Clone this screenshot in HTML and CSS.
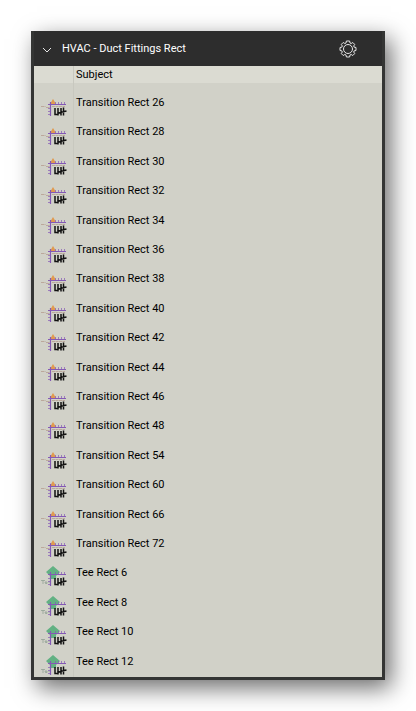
FILE: index.html
```
<!DOCTYPE html>
<html lang="en">
  <head>
    <meta charset="utf-8" />
    <title>HVAC - Duct Fittings Rect</title>
    <link rel="stylesheet" href="styles.css">
  </head>
  <body>
    <!-- Tool icons, reused by every row -->
    <svg class="sprite" aria-hidden="true">
      <symbol id="measure" viewBox="0 0 26 20">
        <path d="M7 7.5H25M9.5 5V19" fill="none" stroke="#8459b5" stroke-width="1.2" />
        <path d="M14.5 5V8M17.5 5V8M20.5 5V8M23.5 5V8M7 11.5H10M7 14.5H10M7 17.5H10" fill="none" stroke="#8459b5" stroke-opacity=".7" />
        <path d="M14 11V17.500H16.500M17 11V18.500M20 11V18.500M22.500 10.500V18.500M16.500 16.500L21 15L25.500 14" fill="none" stroke="#111" stroke-width="1.5" />
      </symbol>
      <symbol id="transition" viewBox="0 0 26 20">
        <path d="M12 2L15 7H9Z" fill="#e09a50" />
        <path d="M0 9.500H4.500M5 10.500H10M11 9.500H24" fill="none" stroke="#a6806f" stroke-width="1" stroke-dasharray="3 .5" opacity=".5" />
        <use href="#measure" />
      </symbol>
      <symbol id="tee" viewBox="0 0 26 20">
        <path d="M12 -1L19 5L15 9V12H9V9L5 5Z" fill="#62b183" />
        <path d="M0 13.500H4M2 13.500V17M4 15H6V16.500H4.500ZM7 15H9" fill="none" stroke="#78907f" stroke-width="1" opacity=".55" />
        <use href="#measure" />
      </symbol>
    </svg>

    <section class="panel">
      <header class="header">
        <button class="toggle" aria-label="Collapse">
          <svg width="10" height="6" viewBox="0 0 10 6"><path d="M1 1L5 5L9 1" /></svg>
        </button>
        <h1 class="title">HVAC - Duct Fittings Rect</h1>
        <button class="settings" aria-label="Settings">
          <svg width="18" height="18" viewBox="0 0 18 18">
            <path d="M7.4 1H10.6L11 3L12.2 3.5L13.8 2.5L15.7 4.4L14.7 6L15.1 7.1L17 7.5V10.5L15.1 10.9L14.7 12L15.7 13.6L13.8 15.5L12.2 14.5L11 15L10.6 17H7.4L7 15L5.8 14.5L4.2 15.5L2.3 13.6L3.3 12L2.9 10.9L1 10.5V7.5L2.9 7.1L3.3 6L2.3 4.4L4.2 2.5L5.8 3.5L7 3Z" />
            <circle cx="9" cy="9" r="4.500" />
          </svg>
        </button>
      </header>

      <table class="tools">
        <thead>
          <tr><th class="icon"></th><th class="subject">Subject</th></tr>
        </thead>
        <tbody>
          <tr><td class="icon"><svg><use href="#transition" /></svg></td><td class="subject">Transition Rect 26</td></tr>
          <tr><td class="icon"><svg><use href="#transition" /></svg></td><td class="subject">Transition Rect 28</td></tr>
          <tr><td class="icon"><svg><use href="#transition" /></svg></td><td class="subject">Transition Rect 30</td></tr>
          <tr><td class="icon"><svg><use href="#transition" /></svg></td><td class="subject">Transition Rect 32</td></tr>
          <tr><td class="icon"><svg><use href="#transition" /></svg></td><td class="subject">Transition Rect 34</td></tr>
          <tr><td class="icon"><svg><use href="#transition" /></svg></td><td class="subject">Transition Rect 36</td></tr>
          <tr><td class="icon"><svg><use href="#transition" /></svg></td><td class="subject">Transition Rect 38</td></tr>
          <tr><td class="icon"><svg><use href="#transition" /></svg></td><td class="subject">Transition Rect 40</td></tr>
          <tr><td class="icon"><svg><use href="#transition" /></svg></td><td class="subject">Transition Rect 42</td></tr>
          <tr><td class="icon"><svg><use href="#transition" /></svg></td><td class="subject">Transition Rect 44</td></tr>
          <tr><td class="icon"><svg><use href="#transition" /></svg></td><td class="subject">Transition Rect 46</td></tr>
          <tr><td class="icon"><svg><use href="#transition" /></svg></td><td class="subject">Transition Rect 48</td></tr>
          <tr><td class="icon"><svg><use href="#transition" /></svg></td><td class="subject">Transition Rect 54</td></tr>
          <tr><td class="icon"><svg><use href="#transition" /></svg></td><td class="subject">Transition Rect 60</td></tr>
          <tr><td class="icon"><svg><use href="#transition" /></svg></td><td class="subject">Transition Rect 66</td></tr>
          <tr><td class="icon"><svg><use href="#transition" /></svg></td><td class="subject">Transition Rect 72</td></tr>
          <tr><td class="icon"><svg><use href="#tee" /></svg></td><td class="subject">Tee Rect 6</td></tr>
          <tr><td class="icon"><svg><use href="#tee" /></svg></td><td class="subject">Tee Rect 8</td></tr>
          <tr><td class="icon"><svg><use href="#tee" /></svg></td><td class="subject">Tee Rect 10</td></tr>
          <tr><td class="icon"><svg><use href="#tee" /></svg></td><td class="subject">Tee Rect 12</td></tr>
        </tbody>
      </table>
    </section>
  </body>
</html>
```

FILE: styles.css
```
* {
  margin: 0;
  padding: 0;
  box-sizing: border-box;
}

body {
  display: flex;
  min-height: 100vh;
  padding: 31px;
  background: #fff;
  font-family: Roboto, sans-serif;
  font-size: 11px;
  line-height: 18px;
  color: #000;
}

.sprite {
  display: none;
}

.sprite symbol {
  overflow: visible;
}

.panel {
  flex: 1;
  display: flex;
  flex-direction: column;
  border: 3px solid #343534;
  border-top: none;
  background: #d1d1c8;
  box-shadow: 6px 8px 22px rgba(0, 0, 0, 0.58);
}

.header {
  display: flex;
  align-items: center;
  height: 35px;
  padding: 1px 25px 0 7px;
  background: #2d2d2d;
  color: #fff;
}

.title {
  flex: 1;
  padding-left: 8px;
  font-size: 11px;
  font-weight: 400;
}

button {
  display: flex;
  border: none;
  background: transparent;
  cursor: pointer;
}

button svg {
  fill: none;
  stroke: #e6e6e6;
}

.toggle {
  padding: 6px 2px 4px 1px;
}

.tools {
  flex: 1;
  display: flex;
  flex-direction: column;
  border-spacing: 0;
}

tr {
  display: grid;
  grid-template-columns: 40px 1fr;
}

thead {
  display: block;
  background: #dbdbd2;
}

th {
  height: 17px;
  font-weight: 400;
  text-align: left;
}

/* rows share the height that is left under the column heads */
tbody {
  flex: 1;
  display: grid;
  grid-auto-rows: 1fr;
  padding-top: 6px;
  background: linear-gradient(90deg, transparent 39px, #c8c8bf 39px, #c8c8bf 40px, transparent 40px);
}

.icon {
  border-right: 1px solid #c8c8bf;
}

td.icon {
  padding: 8px 0 0 7px;
}

td svg {
  display: block;
  width: 26px;
  height: 20px;
  overflow: visible;
}

.subject {
  padding-left: 2px;
}

td.subject {
  padding-top: 5px;
}
```
